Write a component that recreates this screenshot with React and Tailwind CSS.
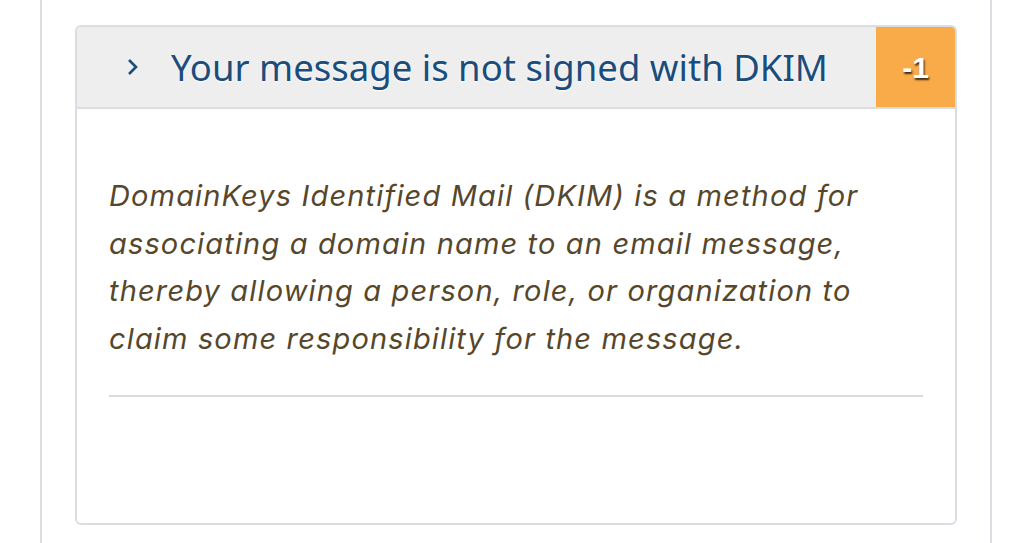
import React from 'react';

// DKIM check result card, shown expanded with its explanation.
export default function App() {
  return (
    <div className="h-[543px] w-[1024px] overflow-hidden bg-white">
      <div className="ml-[40px] h-full w-[952px] border-x-2 border-[#dcdde3] px-[33px] pt-[25px]">
        <div className="flex h-[500px] flex-col overflow-hidden rounded-md border-2 border-[#dcdde3] bg-white">
          {/* Header row */}
          <div className="flex h-[82px] shrink-0 items-stretch border-b-2 border-[#dcdde3] bg-[#eeeeee]">
            <div className="flex flex-1 items-center pl-[50px]">
              <svg width="12" height="20" viewBox="0 0 12 20" className="mr-[32px]">
                <path d="M2 3 L9 10 L2 17" fill="none" stroke="#1b4d7c" strokeWidth="2.6" />
              </svg>
              <span
                className="text-[36.5px] leading-none text-[#1b4d7c] [text-shadow:0_1px_2px_#ffffff]"
                style={{ fontFamily: '"Noto Sans", "Open Sans", sans-serif' }}
              >
                Your message is not signed with DKIM
              </span>
            </div>
            <div
              className="flex w-[79px] items-center justify-center bg-[#f8ab48] text-[30px] font-bold text-white [text-shadow:1px_2px_2px_#3a2a10]"
              style={{ fontFamily: '"Liberation Sans", Arial, sans-serif' }}
            >
              -1
            </div>
          </div>

          {/* Body */}
          <div className="px-[32px] pt-[63px]">
            <p
              className="text-[29px] font-normal italic leading-[47.6px] tracking-[1.15px] text-[#56472c]"
              style={{ fontFamily: 'Inter, sans-serif' }}
            >
              DomainKeys Identified Mail (DKIM) is a method for
              <br />
              associating a domain name to an email message,
              <br />
              thereby allowing a person, role, or organization to
              <br />
              claim some responsibility for the message.
            </p>
            <div className="mt-[33px] h-[2px] bg-[#dcdde3]" />
          </div>
        </div>
      </div>
    </div>
  );
}
